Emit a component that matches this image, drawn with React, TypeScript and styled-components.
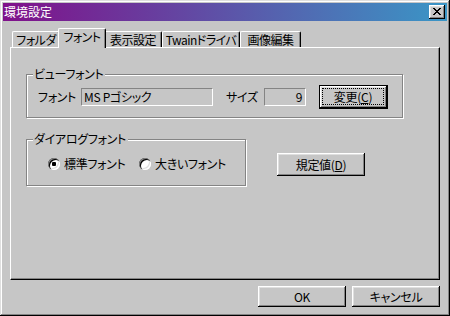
import React from "react";
import styled, { createGlobalStyle, css } from "styled-components";

const FONT = `"Noto Sans CJK JP", "Noto Sans", sans-serif`;
const FACE = "#c6c6c6";
const SHADOW = "#848484";
const LIGHT = "#dfdfdf";

const Global = createGlobalStyle`
  html, body { margin: 0; padding: 0; background: ${FACE}; }
  body { font-family: ${FONT}; font-size: 12px; color: #000; line-height: 14px; }
  * { box-sizing: border-box; }
`;

const Window = styled.div`
  width: 450px;
  height: 316px;
  padding: 3px;
  background: ${FACE};
  display: flex;
  flex-direction: column;
  font-feature-settings: "palt";
  letter-spacing: -0.3px;
  box-shadow: inset -1px -1px #000, inset 1px 1px ${LIGHT},
    inset -2px -2px ${SHADOW}, inset 2px 2px #fff;
`;

const TitleBar = styled.div`
  height: 18px;
  flex: none;
  display: flex;
  align-items: center;
  justify-content: space-between;
  padding: 0 2px 0 1px;
  color: #fff;
  letter-spacing: 0;
  background: linear-gradient(90deg, #80108a 0%, #3a96c6 100%);
`;

const TitleText = styled.span`
  font-size: 12px;
  line-height: 18px;
`;

const CloseButton = styled.div`
  width: 16px;
  height: 14px;
  display: flex;
  align-items: flex-start;
  justify-content: flex-start;
  padding: 3px 0 0 4px;
  background: ${FACE};
  box-shadow: inset -1px -1px #000, inset 1px 1px #fff,
    inset -2px -2px ${SHADOW}, inset 2px 2px ${LIGHT};
`;

const X_PATTERN = [
  "11000011",
  "01100110",
  "00111100",
  "00011000",
  "00111100",
  "01100110",
  "11000011",
];

const CloseGlyph = () => (
  <svg width="8" height="7" viewBox="0 0 8 7" shapeRendering="crispEdges">
    {X_PATTERN.flatMap((row, y) =>
      row.split("").map((c, x) =>
        c === "1" ? <rect key={`${x}-${y}`} x={x} y={y} width="1" height="1" fill="#000" /> : null
      )
    )}
  </svg>
);

const TabStrip = styled.div`
  display: flex;
  align-items: flex-end;
  margin: 7px 0 0 9px;
  position: relative;
  z-index: 1;
`;

const Tab = styled.div<{ $w: number; $active?: boolean }>`
  width: ${(p) => p.$w}px;
  height: 16px;
  flex: none;
  display: flex;
  align-items: center;
  justify-content: center;
  white-space: nowrap;
  letter-spacing: -0.5px;
  background: ${FACE};
  border-top: 1px solid #fff;
  border-left: 1px solid #fff;
  border-right: 1px solid #000;
  border-top-left-radius: 2px;
  border-top-right-radius: 2px;
  box-shadow: inset -1px 0 ${SHADOW};
  ${(p) =>
    p.$active &&
    css`
      height: 20px;
      margin: 0 -2px -1px;
      padding-bottom: 3px;
      position: relative;
      z-index: 1;
    `}
`;

const Panel = styled.div`
  margin: 0 7px;
  height: 233px;
  flex: none;
  border: 1px solid;
  border-color: #fff #000 #000 #fff;
  box-shadow: inset -1px -1px ${SHADOW};
  padding: 26px 0 0 15px;
  display: flex;
  flex-direction: column;
`;

const Group = styled.div<{ $w: number; $h: number }>`
  position: relative;
  width: ${(p) => p.$w}px;
  height: ${(p) => p.$h}px;
  flex: none;
  border: 1px solid ${SHADOW};
  box-shadow: inset 1px 1px #fff, 1px 1px #fff;
`;

const Legend = styled.span`
  position: absolute;
  top: -8px;
  left: 6px;
  padding: 0 2px 0 1px;
  background: ${FACE};
  line-height: 14px;
  white-space: nowrap;
`;

const FieldRow = styled.div`
  display: flex;
  align-items: center;
  height: 24px;
  margin: 10px 0 0 11px;
`;

const Label = styled.span<{ $w: number; $gap?: number }>`
  width: ${(p) => p.$w}px;
  margin-left: ${(p) => p.$gap ?? 0}px;
  flex: none;
  white-space: nowrap;
`;

const Field = styled.div<{ $w: number; $right?: boolean }>`
  width: ${(p) => p.$w}px;
  height: 18px;
  flex: none;
  display: flex;
  align-items: center;
  justify-content: ${(p) => (p.$right ? "flex-end" : "flex-start")};
  padding: 0 3px 0 2px;
  border: 1px solid;
  border-color: ${SHADOW} #fff #fff ${SHADOW};
  background: ${FACE};
  white-space: nowrap;
`;

const Button = styled.div<{ $w: number; $h: number; $default?: boolean; $gap?: number; $top?: number }>`
  width: ${(p) => p.$w}px;
  height: ${(p) => p.$h}px;
  margin-left: ${(p) => p.$gap ?? 0}px;
  margin-top: ${(p) => p.$top ?? 0}px;
  flex: none;
  display: flex;
  align-items: center;
  justify-content: center;
  background: ${FACE};
  white-space: nowrap;
  box-shadow: inset -1px -1px #000, inset 1px 1px #fff,
    inset -2px -2px ${SHADOW}, inset 2px 2px ${LIGHT};
  ${(p) =>
    p.$default &&
    css`
      border: 1px solid #000;
      align-items: stretch;
      padding: 2px 3px 3px 2px;
    `}
`;

const FocusRing = styled.span`
  flex: 1;
  display: flex;
  align-items: center;
  justify-content: center;
  border: 1px dotted #000;
`;

const GroupRow = styled.div`
  display: flex;
  align-items: flex-start;
  margin-top: 21px;
`;

const RadioRow = styled.div`
  display: flex;
  align-items: center;
  margin: 18px 0 0 21px;
  height: 12px;
`;

const RadioOption = styled.label<{ $w?: number }>`
  display: flex;
  align-items: center;
  gap: 4px;
  flex: none;
  width: ${(p) => (p.$w ? `${p.$w}px` : "auto")};
  white-space: nowrap;
`;

const RadioCircle = styled.span`
  width: 12px;
  height: 12px;
  flex: none;
  border-radius: 50%;
  background: #fff;
  display: flex;
  align-items: center;
  justify-content: center;
  box-shadow: inset 1px 1px ${SHADOW}, inset 2px 2px #000,
    inset -1px -1px #fff, inset -2px -2px ${LIGHT};
`;

const RadioDot = styled.span`
  width: 4px;
  height: 4px;
  border-radius: 1px;
  background: #000;
`;

const Footer = styled.div`
  display: flex;
  justify-content: flex-end;
  gap: 6px;
  margin: 6px 7px 0 0;
`;

const Radio = ({ checked, label, w }: { checked?: boolean; label: string; w?: number }) => (
  <RadioOption $w={w}>
    <RadioCircle>{checked && <RadioDot />}</RadioCircle>
    <span>{label}</span>
  </RadioOption>
);

export default function App() {
  return (
    <>
      <Global />
      <Window>
        <TitleBar>
          <TitleText>環境設定</TitleText>
          <CloseButton>
            <CloseGlyph />
          </CloseButton>
        </TitleBar>

        <TabStrip>
          <Tab $w={48}>フォルダ</Tab>
          <Tab $w={48} $active>
            フォント
          </Tab>
          <Tab $w={58}>表示設定</Tab>
          <Tab $w={78}>Twainドライバ</Tab>
          <Tab $w={61}>画像編集</Tab>
        </TabStrip>

        <Panel>
          <Group $w={377} $h={44}>
            <Legend>ビューフォント</Legend>
            <FieldRow>
              <Label $w={43}>フォント</Label>
              <Field $w={132}>MS Pゴシック</Field>
              <Label $w={38} $gap={13}>
                サイズ
              </Label>
              <Field $w={42} $right>
                9
              </Field>
              <Button $w={69} $h={24} $gap={13} $default>
                <FocusRing>
                  変更(<u>C</u>)
                </FocusRing>
              </Button>
            </FieldRow>
          </Group>

          <GroupRow>
            <Group $w={220} $h={47}>
              <Legend>ダイアログフォント</Legend>
              <RadioRow>
                <Radio checked label="標準フォント" w={91} />
                <Radio label="大きいフォント" />
              </RadioRow>
            </Group>
            <Button $w={88} $h={23} $gap={31} $top={14}>
              規定値(<u>D</u>)
            </Button>
          </GroupRow>
        </Panel>

        <Footer>
          <Button $w={88} $h={21}>
            OK
          </Button>
          <Button $w={88} $h={21}>
            キャンセル
          </Button>
        </Footer>
      </Window>
    </>
  );
}
